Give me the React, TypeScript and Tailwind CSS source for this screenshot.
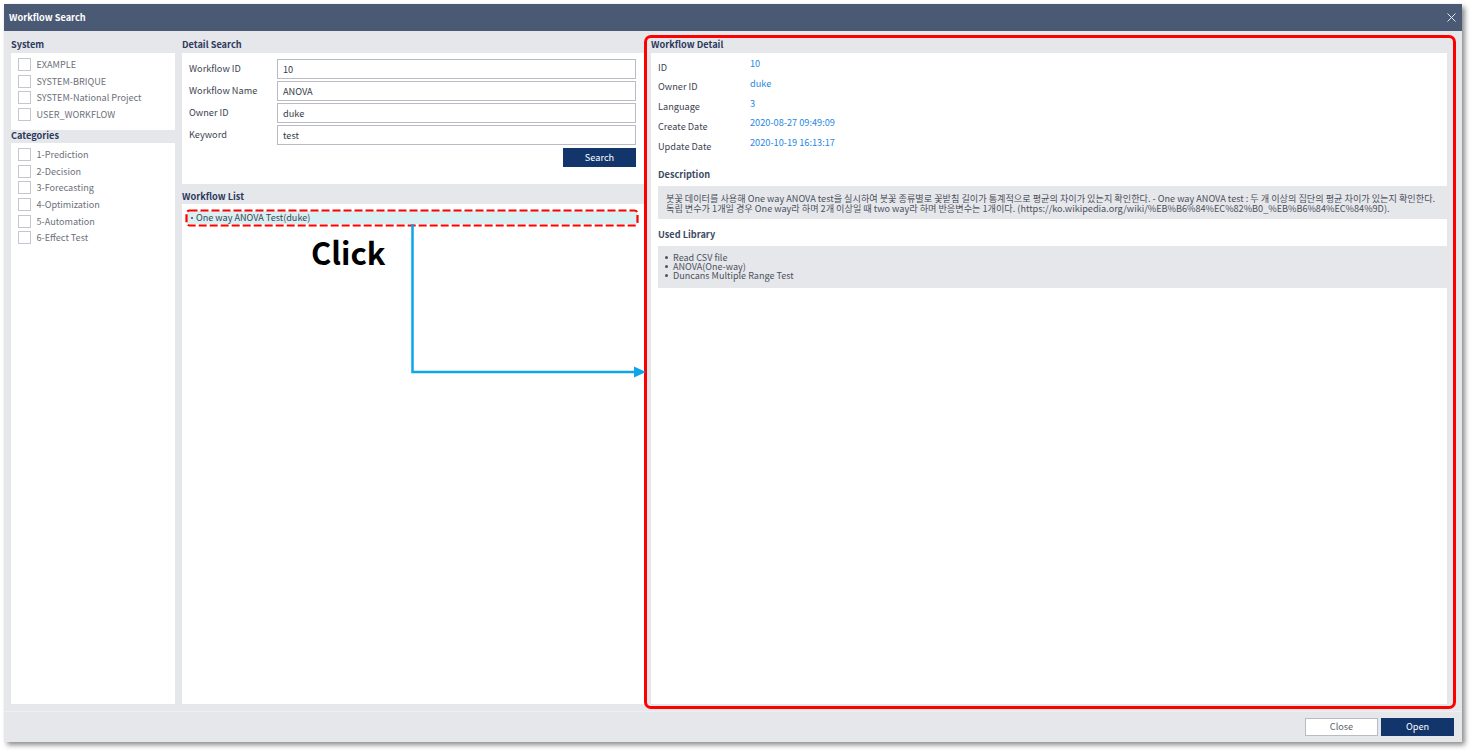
import React from 'react'

const systems = ['EXAMPLE', 'SYSTEM-BRIQUE', 'SYSTEM-National Project', 'USER_WORKFLOW']
const categories = ['1-Prediction', '2-Decision', '3-Forecasting', '4-Optimization', '5-Automation', '6-Effect Test']
const fields = [
  { label: 'Workflow ID', value: '10' },
  { label: 'Workflow Name', value: 'ANOVA' },
  { label: 'Owner ID', value: 'duke' },
  { label: 'Keyword', value: 'test' },
]
const details = [
  { label: 'ID', value: '10' },
  { label: 'Owner ID', value: 'duke' },
  { label: 'Language', value: '3' },
  { label: 'Create Date', value: '2020-08-27 09:49:09' },
  { label: 'Update Date', value: '2020-10-19 16:13:17' },
]
const libraries = ['Read CSV file', 'ANOVA(One-way)', 'Duncans Multiple Range Test']

function SectionTitle({ children }: { children: React.ReactNode }) {
  return <h2 className="h-[22px] pt-[6px] text-[9.2px] leading-[15px] font-bold text-[#2c3a5c]">{children}</h2>
}

function CheckRow({ label }: { label: string }) {
  return (
    <label className="flex h-[16.7px] items-center gap-[5.5px] text-[9.1px] text-[#6d717a]">
      <span className="h-[13px] w-[13px] border border-[#c3c6cf] bg-white" />
      <span className="pt-[1px]">{label}</span>
    </label>
  )
}

export default function App() {
  return (
    <div className="relative h-[756px] w-[1476px] overflow-hidden bg-white font-['Noto_Sans_CJK_KR','Noto_Sans',sans-serif]">
      <div className="ml-[4px] mt-[4px] flex h-[738px] w-[1458px] flex-col bg-[#e6e7eb] shadow-[3px_3px_5px_rgba(0,0,0,0.45)]">
        <header className="flex h-[27px] shrink-0 items-center justify-between bg-[#4a5a74] pl-[5px] pr-[6px]">
          <span className="mt-[1px] text-[9.2px] font-bold text-white">Workflow Search</span>
          <svg width="9" height="9" viewBox="0 0 9 9" stroke="#e6e9ef" strokeWidth="1" fill="none">
            <path d="M0.5 0.5 8.5 8.5M8.5 0.5 0.5 8.5" />
          </svg>
        </header>

        <div className="flex h-[681px] shrink-0 gap-[7px] border-b border-[#eeeff2] pl-[7px]">
          <div className="flex w-[164px] flex-col pb-[7px]">
            <SectionTitle>System</SectionTitle>
            <div className="h-[77px] bg-white pl-[7px] pt-[3px]">
              {systems.map((s) => <CheckRow key={s} label={s} />)}
            </div>
            <h2 className="h-[13px] text-[9.2px] leading-[10px] font-bold text-[#2c3a5c]">Categories</h2>
            <div className="flex-1 bg-white pl-[7px] pt-[3px]">
              {categories.map((c) => <CheckRow key={c} label={c} />)}
            </div>
          </div>

          <div className="flex w-[462px] flex-col pb-[7px]">
            <SectionTitle>Detail Search</SectionTitle>
            <div className="h-[131px] bg-white pl-[7px] pr-[8px] pt-[6px]">
              <div className="flex flex-col gap-[2px]">
                {fields.map((f) => (
                  <div key={f.label} className="flex h-[20px] items-center">
                    <span className="w-[88px] pb-[1px] text-[9.2px] text-[#3c4452]">{f.label}</span>
                    <input
                      readOnly
                      value={f.value}
                      className="h-[20px] flex-1 border border-[#b9bcc4] bg-white px-[5px] text-[9.2px] text-[#333a46] outline-none"
                    />
                  </div>
                ))}
              </div>
              <div className="mt-[3px] flex justify-end">
                <button className="h-[19px] w-[73px] bg-[#12356b] text-[9.2px] text-white">Search</button>
              </div>
            </div>
            <h2 className="h-[20px] pt-[5px] text-[9.2px] leading-[15px] font-bold text-[#2c3a5c]">Workflow List</h2>
            <div className="flex-1 bg-white px-[5px] pt-[7px]">
              <div className="flex h-[13px] w-[450px] items-center gap-[3px] bg-[#d9eff1] pl-[4px] text-[9.1px] text-[#3c4452]">
                <span className="h-[2px] w-[2px] rounded-full bg-[#3c4452]" />
                One way ANOVA Test(duke)
              </div>
            </div>
          </div>

          <div className="flex w-[796px] flex-col pb-[7px]">
            <SectionTitle>Workflow Detail</SectionTitle>
            <div className="flex-1 bg-white pl-[7px] pt-[3px]">
              {details.map((d) => (
                <div key={d.label} className="flex h-[19.8px] text-[9.2px]">
                  <span className="w-[92px] pt-[3.5px] leading-[15px] text-[#3c4452]">{d.label}</span>
                  <span className="leading-[15px] text-[#1e88e5]">{d.value}</span>
                </div>
              ))}
              <h3 className="mt-[12px] text-[9.2px] leading-[15px] font-bold text-[#3c4a62]">Description</h3>
              <div className="mt-[4px] h-[33px] whitespace-nowrap bg-[#e6e7eb] px-[8px] pt-[7px] text-[9.13px] leading-[10px] text-[#4b515c]">
                붓꽃 데이터를 사용해 One way ANOVA test을 실시하여 붓꽃 종류별로 꽃받침 길이가 통계적으로 평균의 차이가 있는지 확인한다. - One way ANOVA test : 두 개 이상의 집단의 평균 차이가 있는지 확인한다.
                <br />
                독립 변수가 1개일 경우 One way라 하며 2개 이상일 때 two way라 하며 반응변수는 1개이다. (https://ko.wikipedia.org/wiki/%EB%B6%84%EC%82%B0_%EB%B6%84%EC%84%9D).
              </div>
              <h3 className="mt-[8px] text-[9.2px] leading-[15px] font-bold text-[#3c4a62]">Used Library</h3>
              <ul className="mt-[4px] h-[42px] bg-[#e6e7eb] pl-[7px] pt-[7px] text-[9.05px] leading-[9px] text-[#4b515c]">
                {libraries.map((l) => (
                  <li key={l} className="flex h-[9px] items-center gap-[5px]">
                    <span className="h-[3px] w-[3px] rounded-full bg-[#4b515c]" />
                    {l}
                  </li>
                ))}
              </ul>
            </div>
          </div>
        </div>

        <footer className="flex flex-1 items-start justify-end gap-[3px] pr-[8px] pt-[6px]">
          <button className="h-[18px] w-[73px] border border-[#b9bcc4] bg-white text-[9.2px] text-[#5d6270]">Close</button>
          <button className="h-[18px] w-[73px] bg-[#12356b] text-[9.2px] text-white">Open</button>
        </footer>
      </div>

      {/* annotations drawn over the screenshot */}
      <div className="absolute left-[644px] top-[35px] h-[674px] w-[812px] rounded-[7px] border-[3px] border-[#ff0000]" />
      <svg className="absolute left-[185px] top-[209px]" width="454" height="18" viewBox="0 0 454 18" fill="none">
        <rect x="1.5" y="1.5" width="451" height="15" rx="3" stroke="#ff0000" strokeWidth="2.2" strokeDasharray="8 3" />
      </svg>
      <span className="absolute left-[311px] top-[230px] text-[31px] leading-[44px] font-bold text-black">Click</span>
      <svg className="absolute left-[408px] top-[224px]" width="240" height="154" viewBox="0 0 240 154" fill="none">
        <path d="M4.5 0V148H228" stroke="#0ea5e9" strokeWidth="2.5" />
        <path d="M226 142.5 238 148 226 153.5Z" fill="#0ea5e9" />
      </svg>
    </div>
  )
}
